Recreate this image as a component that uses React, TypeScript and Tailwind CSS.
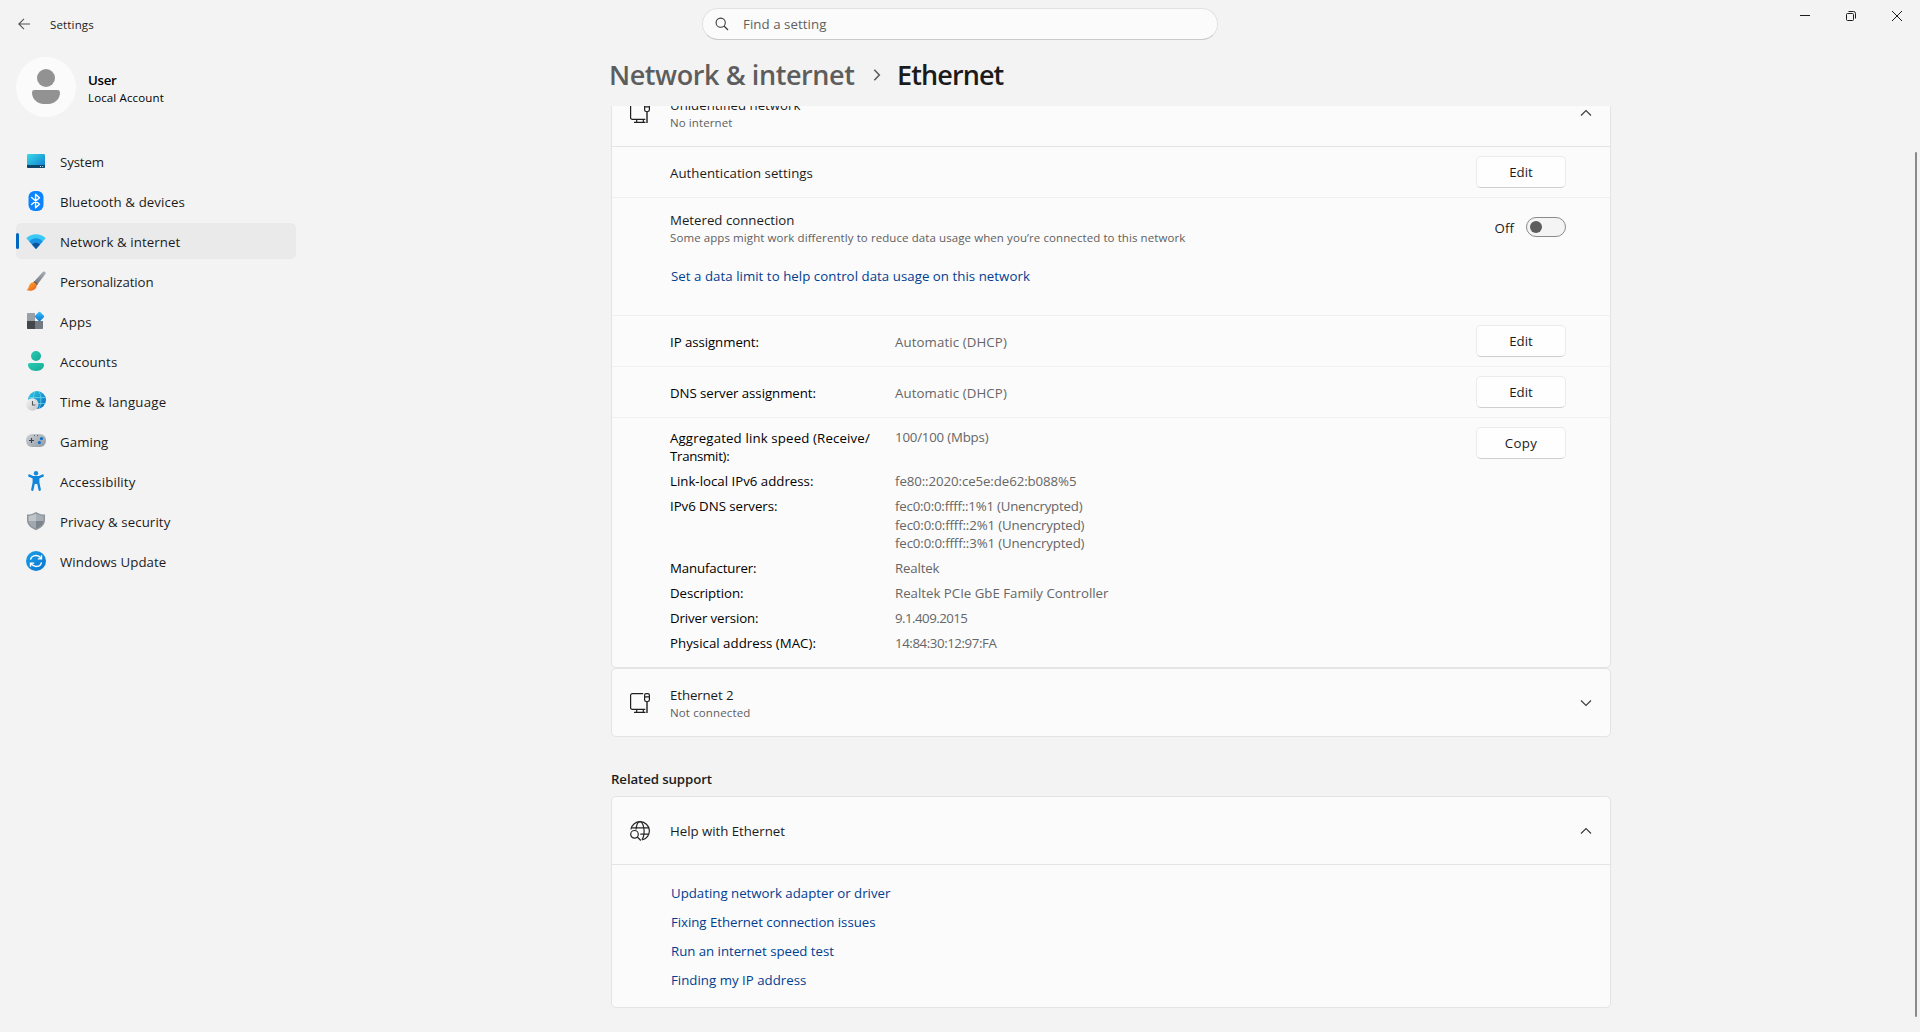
import { useLayoutEffect, useRef, type ReactNode } from "react";

/** Single-line text whose tracking is adjusted so that it occupies `w` pixels. */
function T({ w, className = "", children }: { w: number; className?: string; children: string }) {
  const ref = useRef<HTMLSpanElement>(null);
  useLayoutEffect(() => {
    const el = ref.current;
    if (!el) return;
    el.style.letterSpacing = "0px";
    const natural = el.getBoundingClientRect().width;
    el.style.letterSpacing = `${(w + 0.4 - natural) / children.length}px`;
  }, [w, children]);
  return (
    <span className={"block w-max whitespace-nowrap " + className} ref={ref}>
      {children}
    </span>
  );
}

const body = "text-[13.25px] leading-5";
const caption = "text-[11.5px] leading-4";

function Svg({ children, size = 20 }: { children: ReactNode; size?: number }) {
  return (
    <svg width={size} height={size} viewBox={`0 0 ${size} ${size}`} fill="none" className="shrink-0">
      {children}
    </svg>
  );
}

const SystemIcon = () => (
  <Svg>
    <defs>
      <linearGradient id="sys" x1="0" y1="0" x2="1" y2="1">
        <stop stopColor="#37dbe6" />
        <stop offset="1" stopColor="#0f78d0" />
      </linearGradient>
    </defs>
    <rect x="1" y="3" width="18" height="14" rx="1.2" fill="url(#sys)" />
    <path d="M1 14h18v1.800a1.200 1.200 0 0 1-1.200 1.200H2.200A1.200 1.200 0 0 1 1 15.800z" fill="#0b4568" />
    <path d="M14 15.500h1M16.200 15.500h1" stroke="#cfe6f2" />
  </Svg>
);

const BluetoothIcon = () => (
  <Svg>
    <rect x="2.500" y="0" width="15" height="20" rx="6" fill="#0a84ff" />
    <path d="M5.600 6.500l7.900 6.700-3.900 3.500V3.300l3.900 3.500-7.900 6.700" stroke="#fff" strokeWidth="1.400" strokeLinejoin="round" strokeLinecap="round" />
  </Svg>
);

const WifiIcon = () => (
  <Svg>
    <path d="M10 18L.3 7.200C5.500 1.800 14.500 1.800 19.700 7.200z" fill="#3cc8f5" />
    <path d="M10 18L3.300 10.400c3.500-4.200 9.900-4.200 13.400 0z" fill="#1a93e4" />
    <path d="M10 18l-4-4.500c2-2.300 6-2.300 8 0z" fill="#0c549c" />
  </Svg>
);

const BrushIcon = () => (
  <Svg>
    <defs>
      <linearGradient id="brushTip" x1="0" y1="0" x2="1" y2="1">
        <stop stopColor="#ffb52e" />
        <stop offset="1" stopColor="#e8571c" />
      </linearGradient>
      <linearGradient id="brushStick" x1="0" y1="1" x2="1" y2="0">
        <stop stopColor="#6c7075" />
        <stop offset="1" stopColor="#a9b1b8" />
      </linearGradient>
    </defs>
    <path d="M7.500 11.200L16.800 1c1.400-1.300 3.600.3 2.600 2.100L11 14z" fill="url(#brushStick)" />
    <path d="M8.300 10.200l3.300 3-1 1.300-3.500-3z" fill="#5a4a42" />
    <path d="M7.200 11.300c1.800 0 3.800 1.900 3.400 3.900-.6 3.600-5 5.400-10.100 4 2.300-1.300 1.800-3 2.900-5.100.8-1.700 2.200-2.800 3.800-2.800z" fill="url(#brushTip)" />
  </Svg>
);

const AppsIcon = () => (
  <Svg>
    <defs>
      <linearGradient id="appGem" x1="0" y1="0" x2="1" y2="1">
        <stop stopColor="#3ac0fa" />
        <stop offset="1" stopColor="#0874d1" />
      </linearGradient>
    </defs>
    <path d="M1 2.700A.7.700 0 0 1 1.700 2H9v8H1z" fill="#9aa0a8" />
    <path d="M1 10h8v8H1.700A.7.700 0 0 1 1 17.300z" fill="#43464a" />
    <path d="M9 10h8v7.300a.7.700 0 0 1-.7.700H9z" fill="#747a82" />
    <rect x="9.900" y="1.900" width="7.200" height="7.200" rx="1" transform="rotate(45 13.500 5.500)" fill="url(#appGem)" />
  </Svg>
);

const AccountsIcon = () => (
  <Svg>
    <defs>
      <linearGradient id="acct" x1="0" y1="0" x2="1" y2="1">
        <stop stopColor="#27cdb4" />
        <stop offset="1" stopColor="#17a893" />
      </linearGradient>
    </defs>
    <circle cx="10" cy="5" r="5" fill="url(#acct)" />
    <path d="M3.800 12h12.400c1 0 1.800.8 1.800 1.800 0 3.700-3.300 6.200-8 6.200s-8-2.500-8-6.200c0-1 .8-1.800 1.800-1.800z" fill="url(#acct)" />
  </Svg>
);

const TimeIcon = () => (
  <Svg>
    <defs>
      <linearGradient id="globe" x1="0" y1="0" x2="1" y2="1">
        <stop stopColor="#31cbe0" />
        <stop offset="1" stopColor="#0a67c0" />
      </linearGradient>
      <linearGradient id="clock" x1="0" y1="0" x2="1" y2="1">
        <stop stopColor="#f5f5f5" />
        <stop offset="1" stopColor="#c2c4c7" />
      </linearGradient>
    </defs>
    <circle cx="11" cy="9" r="9" fill="url(#globe)" />
    <path d="M3 6.500h16.300M10 12.500h9M9 0.500C6.500 5 7 13 9 17.500M13 .5c2.500 4.500 2.500 12.500 0 17" stroke="#6fe0ef" strokeWidth=".7" />
    <circle cx="6.300" cy="13.500" r="6.200" fill="url(#clock)" />
    <path d="M6.500 10v4h2.900" stroke="#55595e" strokeWidth="1.100" />
  </Svg>
);

const GamingIcon = () => (
  <Svg>
    <defs>
      <linearGradient id="pad" x1="0" y1="0" x2="1" y2="1">
        <stop stopColor="#cdd3d8" />
        <stop offset="1" stopColor="#8f979f" />
      </linearGradient>
    </defs>
    <rect x="0" y="3" width="20" height="13" rx="6" fill="url(#pad)" />
    <path d="M5.500 7v5M3 9.500h5" stroke="#3d4145" strokeWidth="1.100" />
    <path d="M8 4.700h1M11 4.700h1" stroke="#55595e" />
    <circle cx="15.500" cy="7.600" r="1.600" fill="#0a6fcb" />
    <circle cx="13.400" cy="11.500" r="1.600" fill="#0a6fcb" />
  </Svg>
);

const AccessibilityIcon = () => (
  <Svg>
    <circle cx="10" cy="2.200" r="2.200" fill="#1389dc" />
    <path d="M3.300 4.600L7.300 6.300h5.400l4-1.700M7.800 6.500v5L6.300 18.700M12.200 6.500v5l1.500 7.200" stroke="#0f86dc" strokeWidth="2.400" strokeLinecap="round" strokeLinejoin="round" />
    <path d="M7 6h6v6.500L10.600 13h-1.200L7 12.500z" fill="#0f86dc" />
  </Svg>
);

const ShieldIcon = () => (
  <Svg>
    <path d="M10 1c2.500 1.700 5.500 2.500 9 2.600v5.700c0 4.200-3.500 7.800-9 9.900-5.500-2.100-9-5.700-9-9.900V3.600C4.500 3.500 7.500 2.700 10 1z" fill="#8d949b" />
    <path d="M10 2.600v7.400H2.500V4.900C5.300 4.700 7.800 4 10 2.600z" fill="#c0c5ca" />
    <path d="M10 2.600v7.400h7.500V4.900c-2.800-.2-5.300-.9-7.500-2.300z" fill="#a7aeb6" />
    <path d="M2.500 10H10v7.600C5.900 15.900 3 13.300 2.500 10z" fill="#a2a8af" />
    <path d="M17.500 10H10v7.600c4.100-1.700 7-4.300 7.500-7.600z" fill="#7d848c" />
  </Svg>
);

const UpdateIcon = () => (
  <Svg>
    <defs>
      <linearGradient id="upd" x1="0" y1="0" x2="1" y2="1">
        <stop stopColor="#1aa0ea" />
        <stop offset="1" stopColor="#0873cf" />
      </linearGradient>
    </defs>
    <circle cx="10" cy="10" r="10" fill="url(#upd)" />
    <path d="M4.500 8.700C5.500 3.900 12 3.100 15 7.300M15.500 4.200v3.700h-3.700M15.500 11.300c-1 4.800-7.500 5.600-10.500 1.400M4.500 15.800v-3.700h3.700" stroke="#fff" strokeWidth="1.400" />
  </Svg>
);

const EthernetIcon = () => (
  <Svg>
    <g stroke="#1f1f1f" strokeWidth="1.200">
      <path d="M13.200 .6H2.300A1.700 1.700 0 0 0 .6 2.300v12.400a1.700 1.700 0 0 0 1.700 1.700h13M6.700 16.400v3M13.300 16.400v3M4 19.400h11.500" />
      <path d="M14.600 3.800h4.800v3c0 .9-.7 1.700-1.600 1.700h-1.600c-.9 0-1.600-.8-1.600-1.700V2.200c0-.9.7-1.600 1.600-1.600h1.600c.9 0 1.600.7 1.600 1.600v1.600" />
    </g>
    <path d="M17 8.500V20" stroke="#3a3a3a" strokeWidth="1.600" />
  </Svg>
);

const GlobeSearchIcon = () => (
  <Svg>
    <g stroke="#242424" strokeWidth="1.200">
      <path d="M.9 8.300A9.300 9.300 0 1 1 12.200 19M1.300 6.800h17.400M10.300 13.200h8.400" />
      <path d="M6 8.500C6.500 4 8.200.7 10 .7c2.200 0 4.100 4.200 4.100 9.300 0 3.800-.9 7.200-2.300 8.700" />
      <circle cx="4.500" cy="13.300" r="3.800" />
      <path d="M7.300 16l3.500 3.500" />
    </g>
  </Svg>
);

function Chevron({ up = false }: { up?: boolean }) {
  return (
    <Svg size={12}>
      <path d={up ? "M1 8.500l5-5 5 5" : "M1 3.500l5 5 5-5"} stroke="#3f3f3f" strokeWidth="1.200" />
    </Svg>
  );
}

const nav: { label: string; w: number; Icon: () => ReactNode }[] = [
  { label: "System", w: 43.5, Icon: SystemIcon },
  { label: "Bluetooth & devices", w: 124.5, Icon: BluetoothIcon },
  { label: "Network & internet", w: 120, Icon: WifiIcon },
  { label: "Personalization", w: 93, Icon: BrushIcon },
  { label: "Apps", w: 31.5, Icon: AppsIcon },
  { label: "Accounts", w: 57, Icon: AccountsIcon },
  { label: "Time & language", w: 106, Icon: TimeIcon },
  { label: "Gaming", w: 48, Icon: GamingIcon },
  { label: "Accessibility", w: 75, Icon: AccessibilityIcon },
  { label: "Privacy & security", w: 110, Icon: ShieldIcon },
  { label: "Windows Update", w: 106, Icon: UpdateIcon },
];

function Button({ label, w }: { label: string; w: number }) {
  return (
    <button className="flex h-8 w-[90px] items-center justify-center rounded-[5px] border border-[#ebebeb] border-b-[#cfcfcf] bg-[#fefefe] pb-px text-[#1b1b1b]">
      <T w={w} className={body}>{label}</T>
    </button>
  );
}

function Header({ icon, children, up }: { icon: ReactNode; children: ReactNode; up?: boolean }) {
  return (
    <div className="flex h-[67px] shrink-0 items-center px-[18px] text-[#1b1b1b]">
      {icon}
      <div className="ml-5 grow">{children}</div>
      <Chevron up={up} />
    </div>
  );
}

function AssignmentRow({ label, w }: { label: string; w: number }) {
  return (
    <div className="flex h-[51px] items-center border-t border-[#f0f0f0] pr-11 pl-[58px]">
      <T w={w} className={body + " pt-px text-black"}>{label}</T>
      <div className="ml-auto flex w-[671px] items-center justify-between">
        <T w={111.5} className={body + " pt-px text-[#666]"}>Automatic (DHCP)</T>
        <Button label="Edit" w={23} />
      </div>
    </div>
  );
}

const infoText = "text-[13.25px] leading-[18px]";

function InfoRow({ label, w, values }: { label: string; w: number; values: [string, number][] }) {
  return (
    <div className="flex pb-[7px]">
      <div className="w-[225px] text-black">
        <T w={w} className={infoText}>{label}</T>
      </div>
      <div className="text-[#666]">
        {values.map(([v, vw], i) => (
          <T key={v} w={vw} className={infoText + (i === 1 ? " pt-px" : "")}>{v}</T>
        ))}
      </div>
    </div>
  );
}

const card = "flex w-[1000px] flex-col rounded-[5px] border border-[#e4e4e4] bg-[#fbfbfb]";

const links: [string, number][] = [
  ["Updating network adapter or driver", 219],
  ["Fixing Ethernet connection issues", 204],
  ["Run an internet speed test", 162.5],
  ["Finding my IP address", 135],
];

export default function App() {
  return (
    <div className="flex h-[1032px] w-[1920px] flex-col overflow-hidden bg-[#f3f3f3] font-['Open_Sans','Noto_Sans',sans-serif] text-[#1b1b1b]">
      <header className="grid h-12 shrink-0 grid-cols-[702px_516px_702px]">
        <div className="flex items-center pl-[18px]">
          <Svg size={12}>
            <path d="M12 6H.8M6 .8L.8 6 6 11.200" stroke="#555" strokeWidth="1.100" />
          </Svg>
          <T w={43.5} className={caption + " ml-5 pt-[2px]"}>Settings</T>
        </div>
        <div className="mt-2 flex h-8 items-center rounded-full border border-[#e2e2e2] border-b-[#c9c9c9] bg-[#fbfbfb] pb-px pl-3">
          <Svg size={14}>
            <circle cx="5.700" cy="5.700" r="4.600" stroke="#3a3a3a" strokeWidth="1.100" />
            <path d="M9 9l4 4" stroke="#3a3a3a" strokeWidth="1.200" />
          </Svg>
          <T w={83} className={body + " ml-[14px] text-[#606060]"}>Find a setting</T>
        </div>
        <div className="flex h-8 justify-end">
          <div className="flex w-[46px] items-center justify-center">
            <Svg size={10}><path d="M0 4.500h10" stroke="#1b1b1b" /></Svg>
          </div>
          <div className="flex w-[46px] items-center justify-center">
            <Svg size={10}>
              <rect x=".5" y="2.500" width="7" height="7" rx="1" stroke="#1b1b1b" />
              <path d="M2.500 .5h5a2 2 0 0 1 2 2v5" stroke="#1b1b1b" />
            </Svg>
          </div>
          <div className="flex w-[46px] items-center justify-center">
            <Svg size={10}><path d="M0 0l10 10M10 0L0 10" stroke="#1b1b1b" /></Svg>
          </div>
        </div>
      </header>

      <div className="flex min-h-0 grow">
        <aside className="w-[609px] shrink-0 pt-[9px] pl-4">
          <div className="flex h-[60px] items-center">
            <div className="flex size-[60px] flex-col items-center rounded-full bg-[#fbfbfb] pt-3">
              <div className="size-[18px] rounded-full bg-[#929292]" />
              <div className="mt-[3px] h-[14px] w-7 rounded-t-[3px] rounded-b-[14px] bg-[#929292]" />
            </div>
            <div className="ml-3 pt-px text-black">
              <T w={28} className={body + " font-semibold"}>User</T>
              <T w={75.5} className={caption}>Local Account</T>
            </div>
          </div>
          <nav className="mt-[26px] flex w-[280px] flex-col gap-1">
            {nav.map(({ label, w, Icon }, i) => (
              <div key={label} className={"flex h-9 items-center rounded-[5px] " + (i === 2 ? "bg-[#eaeaea]" : "")}>
                <div className={"mr-[7px] h-4 w-[3px] rounded-full " + (i === 2 ? "bg-[#0067c0]" : "")} />
                <Icon />
                <T w={w} className={body + " ml-[14px] pt-[2px]"}>{label}</T>
              </div>
            ))}
          </nav>
        </aside>

        <main className="flex grow flex-col">
          <h1 className="flex h-[58px] shrink-0 items-start pt-[9px] text-[27px] leading-[35px] font-semibold">
            <T w={245} className="text-[#5d5d5d]">Network & internet</T>
            <svg width="8" height="12" viewBox="0 0 8 12" fill="none" className="mt-3 ml-[19px]">
              <path d="M1.300 .7l5 5.300-5 5.300" stroke="#5d5d5d" strokeWidth="1.600" />
            </svg>
            <T w={106} className="ml-[15.600px]">Ethernet</T>
          </h1>

          <div className="flex min-h-0 grow justify-between overflow-hidden">
            <div className="-mt-7 ml-[2px]">
              <section className={card + " h-[590px]"}>
                <Header icon={<EthernetIcon />} up>
                  <T w={130} className={body}>Unidentified network</T>
                  <T w={62} className={caption + " text-[#606060]"}>No internet</T>
                </Header>
                <div className="flex h-[51px] shrink-0 items-center justify-between border-t border-[#e4e4e4] pr-11 pl-[58px]">
                  <T w={142.5} className={body + " pt-px"}>Authentication settings</T>
                  <Button label="Edit" w={23} />
                </div>
                <div className="h-[118px] shrink-0 border-t border-[#f0f0f0] pr-11 pl-[58px]">
                  <div className="flex items-center justify-between pt-3">
                    <div>
                      <T w={124} className={body}>Metered connection</T>
                      <T w={515} className={caption + " text-[#606060]"}>Some apps might work differently to reduce data usage when you’re connected to this network</T>
                    </div>
                    <div className="flex items-center pb-[2px]">
                      <T w={19} className={body + " mr-3 pt-px"}>Off</T>
                      <div className="flex h-5 w-10 items-center rounded-full border border-[#8a8a8a] bg-[#f4f4f4] pl-[3px]">
                        <div className="size-3 rounded-full bg-[#5d5d5d]" />
                      </div>
                    </div>
                  </div>
                  <T w={358.5} className={body + " mt-5 ml-px text-[#003e92]"}>Set a data limit to help control data usage on this network</T>
                </div>
                <AssignmentRow label="IP assignment:" w={88.5} />
                <AssignmentRow label="DNS server assignment:" w={145.5} />
                <div className="flex grow items-start justify-between border-t border-[#f0f0f0] pt-[9px] pr-11 pl-[58px]">
                  <div className="pt-[2px]">
                    <div className="flex pb-[7px]">
                      <div className="w-[225px] text-black">
                        <T w={199.5} className={infoText}>Aggregated link speed (Receive/</T>
                        <T w={59} className={infoText}>Transmit):</T>
                      </div>
                      <T w={93} className={infoText + " -mt-px text-[#666]"}>100/100 (Mbps)</T>
                    </div>
                    <InfoRow label="Link-local IPv6 address:" w={143} values={[["fe80::2020:ce5e:de62:b088%5", 181]]} />
                    <InfoRow label="IPv6 DNS servers:" w={107} values={[["fec0:0:0:ffff::1%1 (Unencrypted)", 187], ["fec0:0:0:ffff::2%1 (Unencrypted)", 189], ["fec0:0:0:ffff::3%1 (Unencrypted)", 189]]} />
                    <InfoRow label="Manufacturer:" w={86} values={[["Realtek", 44]]} />
                    <InfoRow label="Description:" w={73} values={[["Realtek PCIe GbE Family Controller", 213]]} />
                    <InfoRow label="Driver version:" w={88} values={[["9.1.409.2015", 72]]} />
                    <InfoRow label="Physical address (MAC):" w={145.5} values={[["14:84:30:12:97:FA", 101]]} />
                  </div>
                  <Button label="Copy" w={32} />
                </div>
              </section>

              <section className={card}>
                <Header icon={<EthernetIcon />}>
                  <T w={63} className={body}>Ethernet 2</T>
                  <T w={80} className={caption + " text-[#606060]"}>Not connected</T>
                </Header>
              </section>

              <T w={100.5} className={body + " mt-8 mb-[7px] font-semibold"}>Related support</T>

              <section className={card + " h-[212px]"}>
                <Header icon={<GlobeSearchIcon />} up>
                  <T w={114.5} className={body + " pt-px"}>Help with Ethernet</T>
                </Header>
                <div className="flex flex-col gap-[9px] border-t border-[#e4e4e4] pt-[18px] pl-[59px] text-[#003e92]">
                  {links.map(([label, w]) => (
                    <T key={label} w={w} className={body}>{label}</T>
                  ))}
                </div>
              </section>
            </div>
            <div className="mt-[46px] mr-[3px] h-[865px] w-[2px] rounded-full bg-[#8a8a8a]" />
          </div>
        </main>
      </div>
    </div>
  );
}
